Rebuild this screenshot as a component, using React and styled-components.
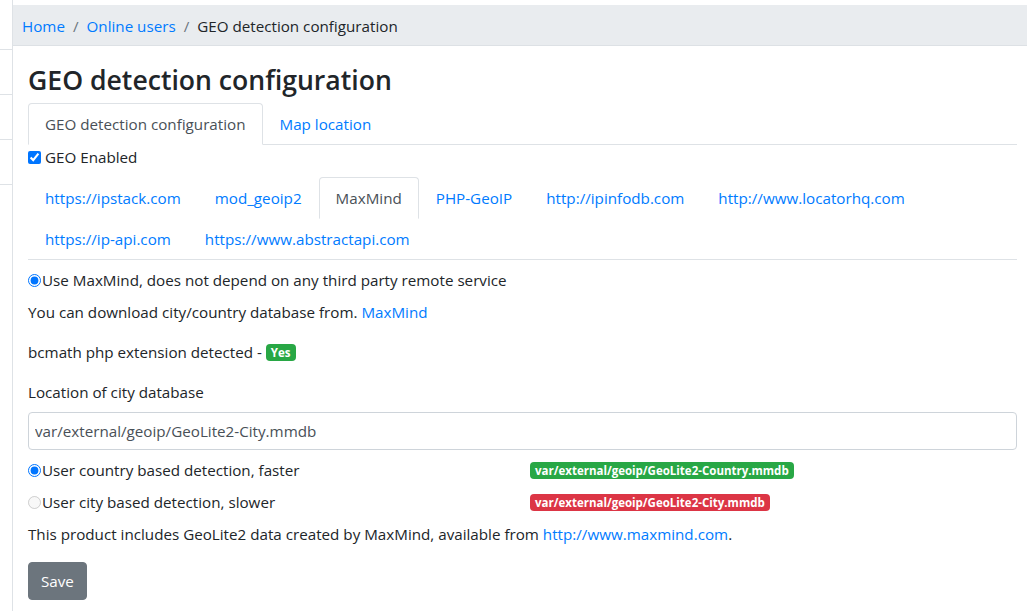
import React from "react";
import styled, { createGlobalStyle } from "styled-components";

const Global = createGlobalStyle`
  html, body { margin: 0; padding: 0; background: #fff; }
  body {
    font-family: "Open Sans", "Noto Sans", "Liberation Sans", sans-serif;
    font-size: 15.2px;
    color: #212529;
  }
  * { box-sizing: border-box; }
`;

const Page = styled.div`
  display: flex;
  padding-top: 5px;
  min-height: 611px;
`;

const Sidebar = styled.ul`
  width: 13px;
  flex: none;
  margin: -5px 0 0;
  padding: 5px 0 0;
  list-style: none;
  border-right: 1px solid #dee2e6;
`;

const SideItem = styled.li`
  height: 45px;
  border-bottom: 1px solid #dee2e6;
`;

const Main = styled.main`
  flex: 1;
  min-width: 0;
`;

const Breadcrumb = styled.nav`
  display: flex;
  align-items: center;
  background: #e9ecef;
  height: 41px;
  padding: 2px 9px 0;
  border-bottom: 1px solid #dde1e5;
`;

const Crumb = styled.a`
  color: ${(p) => (p.$active ? "#212529" : "#007bff")};
  text-decoration: none;
`;

const Sep = styled.span`
  color: #6c757d;
  padding: 0 8px;
`;

const Content = styled.div`
  padding: 17px 10px 0 15px;
`;

const Title = styled.h1`
  margin: 0 0 6px;
  font-size: 26.6px;
  font-weight: 600;
  line-height: 34px;
  color: #212529;
`;

const Tabs = styled.ul`
  display: flex;
  flex-wrap: wrap;
  margin: ${(p) => p.$mt || 0}px 0 0;
  padding: 0;
  list-style: none;
  border-bottom: 1px solid #dee2e6;
`;

const Tab = styled.li`
  margin-bottom: -1px;
  padding: 8px 16px;
  line-height: 24px;
  border-width: 1px;
  border-style: solid;
  border-color: ${(p) => (p.$active ? "#dee2e6 #dee2e6 #fff" : "transparent")};
  border-top-left-radius: 4px;
  border-top-right-radius: 4px;
  background: ${(p) => (p.$active ? "#fff" : "transparent")};
  color: ${(p) => (p.$active ? "#495057" : "#007bff")};
  white-space: nowrap;
`;

const CheckRow = styled.label`
  display: flex;
  align-items: center;
  line-height: 24px;
  margin-top: ${(p) => p.$mt || 0}px;
  margin-bottom: ${(p) => p.$mb || 0}px;
`;

const Check = styled.input`
  width: 13px;
  height: 13px;
  margin: 0 4px 0 0;
  accent-color: #0075ff;
`;

const Radio = styled.input`
  width: 13px;
  height: 13px;
  margin: 0 1px 0 0;
  accent-color: #0075ff;
`;

const Para = styled.p`
  margin: ${(p) => p.$mt || 0}px 0 ${(p) => p.$mb || 0}px;
  line-height: 24px;
`;

const Link = styled.a`
  color: #007bff;
  text-decoration: none;
`;

const Badge = styled.span`
  display: inline-block;
  padding: 2px 5px;
  font-size: 11.5px;
  font-weight: 700;
  line-height: 13px;
  border-radius: 4px;
  color: #fff;
  background: ${(p) => (p.$tone === "danger" ? "#dc3545" : "#28a745")};
  vertical-align: 1px;
`;

const Input = styled.input`
  display: block;
  width: 100%;
  height: 38px;
  margin: 8px 0 8px;
  padding: 6px 6px;
  font: inherit;
  color: #495057;
  border: 1px solid #ced4da;
  border-radius: 4px;
  background: #fff;
`;

const OptionRow = styled.div`
  display: grid;
  grid-template-columns: 502px 1fr;
  align-items: center;
  line-height: 24px;
  margin-bottom: 8px;
`;

const Button = styled.button`
  margin-top: 16px;
  height: 38px;
  padding: 0 12px;
  font: inherit;
  color: #fff;
  background: #6c757d;
  border: 1px solid #6c757d;
  border-radius: 4px;
`;

const providers = [
  { name: "https://ipstack.com" },
  { name: "mod_geoip2" },
  { name: "MaxMind", active: true },
  { name: "PHP-GeoIP" },
  { name: "http://ipinfodb.com" },
  { name: "http://www.locatorhq.com" },
  { name: "https://ip-api.com" },
  { name: "https://www.abstractapi.com" },
];

export default function App() {
  return (
    <>
      <Global />
      <Page>
        <Sidebar>
          <SideItem />
          <SideItem />
          <SideItem />
          <SideItem />
        </Sidebar>
        <Main>
          <Breadcrumb>
            <Crumb href="#">Home</Crumb>
            <Sep>/</Sep>
            <Crumb href="#">Online users</Crumb>
            <Sep>/</Sep>
            <Crumb $active>GEO detection configuration</Crumb>
          </Breadcrumb>
          <Content>
            <Title>GEO detection configuration</Title>
            <Tabs>
              <Tab $active>GEO detection configuration</Tab>
              <Tab>Map location</Tab>
            </Tabs>
            <CheckRow>
              <Check type="checkbox" defaultChecked />
              GEO Enabled
            </CheckRow>
            <Tabs $mt={8}>
              {providers.map((p) => (
                <Tab key={p.name} $active={p.active}>
                  {p.name}
                </Tab>
              ))}
            </Tabs>
            <CheckRow $mt={8} $mb={8}>
              <Radio type="radio" name="use" defaultChecked />
              Use MaxMind, does not depend on any third party remote service
            </CheckRow>
            <Para $mb={16}>
              You can download city/country database from. <Link href="#">MaxMind</Link>
            </Para>
            <Para $mb={16}>
              bcmath php extension detected - <Badge>Yes</Badge>
            </Para>
            <Para>Location of city database</Para>
            <Input defaultValue="var/external/geoip/GeoLite2-City.mmdb" />
            <OptionRow>
              <CheckRow>
                <Radio type="radio" name="det" defaultChecked />
                User country based detection, faster
              </CheckRow>
              <div>
                <Badge>var/external/geoip/GeoLite2-Country.mmdb</Badge>
              </div>
            </OptionRow>
            <OptionRow>
              <CheckRow>
                <Radio type="radio" name="det" disabled />
                User city based detection, slower
              </CheckRow>
              <div>
                <Badge $tone="danger">var/external/geoip/GeoLite2-City.mmdb</Badge>
              </div>
            </OptionRow>
            <Para>
              This product includes GeoLite2 data created by MaxMind, available from{" "}
              <Link href="#">http://www.maxmind.com</Link>.
            </Para>
            <Button>Save</Button>
          </Content>
        </Main>
      </Page>
    </>
  );
}
